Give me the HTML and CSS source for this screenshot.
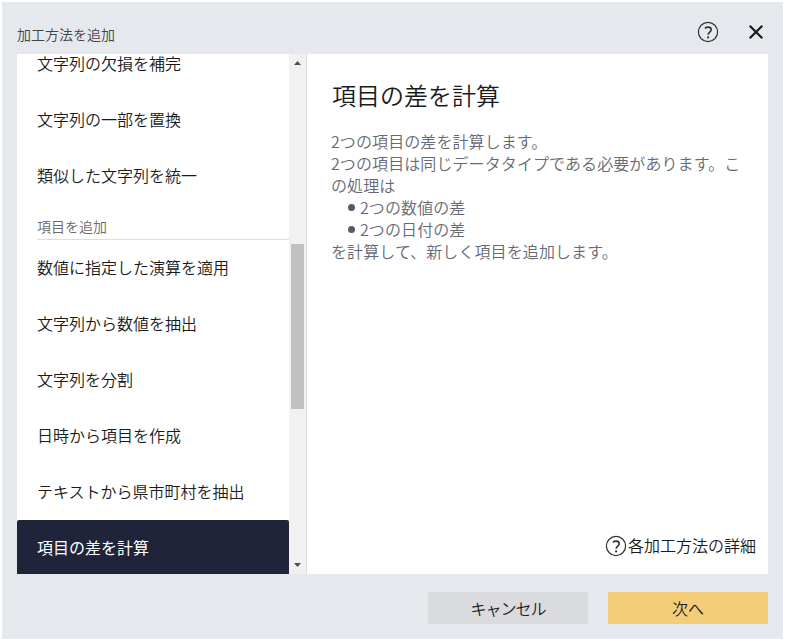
FILE: index.html
```html
<!DOCTYPE html>
<html lang="ja">
<head>
<meta charset="utf-8">
<title>加工方法を追加</title>
<link rel="stylesheet" href="styles.css">
</head>
<body>
<div class="dialog">
  <header class="header">
    <h1 class="title">加工方法を追加</h1>
    <div class="actions">
      <svg class="help" viewBox="0 0 22 22"><circle cx="11" cy="11" r="9.6"/><path d="M7.9 7.3C8.8 6.5 9.8 6.1 11 6.1c2 0 3.2 1 3.2 2.6 0 2.3-3 2.6-3 5"/><circle class="dot" cx="11.1" cy="16.4" r="1.1"/></svg>
      <svg class="close" viewBox="0 0 16 16"><path d="M1.7 1.7 14.3 14.3M14.3 1.7 1.7 14.3"/></svg>
    </div>
  </header>
  <main class="content">
    <nav class="list">
      <div class="item">文字列の欠損を補完</div>
      <div class="item">文字列の一部を置換</div>
      <div class="item">類似した文字列を統一</div>
      <div class="group">項目を追加</div>
      <div class="item">数値に指定した演算を適用</div>
      <div class="item">文字列から数値を抽出</div>
      <div class="item">文字列を分割</div>
      <div class="item">日時から項目を作成</div>
      <div class="item">テキストから県市町村を抽出</div>
      <div class="item selected">項目の差を計算</div>
    </nav>
    <div class="scrollbar">
      <svg class="arrow" viewBox="0 0 17 17"><path d="M5 11 8.5 7 12 11z"/></svg>
      <div class="track"><div class="thumb"></div></div>
      <svg class="arrow" viewBox="0 0 17 17"><path d="M5 6 8.5 10 12 6z"/></svg>
    </div>
    <section class="detail">
      <h2 class="heading">項目の差を計算</h2>
      <div class="text">
        <p>2つの項目の差を計算します。</p>
        <p>2つの項目は同じデータタイプである必要があります。この処理は</p>
        <ul class="points">
          <li>2つの数値の差</li>
          <li>2つの日付の差</li>
        </ul>
        <p>を計算して、新しく項目を追加します。</p>
      </div>
      <a class="more">
        <svg class="help" viewBox="0 0 22 22"><circle cx="11" cy="11" r="9.6"/><path d="M7.9 7.3C8.8 6.5 9.8 6.1 11 6.1c2 0 3.2 1 3.2 2.6 0 2.3-3 2.6-3 5"/><circle class="dot" cx="11.1" cy="16.4" r="1.1"/></svg>
        <span>各加工方法の詳細</span>
      </a>
    </section>
  </main>
  <footer class="footer">
    <button class="button cancel">キャンセル</button>
    <button class="button next">次へ</button>
  </footer>
</div>
</body>
</html>
```
FILE: styles.css
```css
* { box-sizing: border-box; }

body {
  margin: 0;
  padding: 2px;
  background: #fff;
  color: #1a1a1a;
  font: 350 16px/22px "Noto Sans CJK JP", sans-serif;
}

h1, h2, p, ul { margin: 0; padding: 0; font-weight: inherit; }

.dialog {
  display: flex;
  flex-direction: column;
  width: 781px;
  height: 637px;
  padding: 0 15px;
  background: #e5e9ee;
}

.header {
  display: flex;
  justify-content: space-between;
  height: 52px;
}

.title { padding-top: 21px; font-size: 14px; line-height: 22px; color: #444; }

.actions { display: flex; align-items: center; gap: 29px; height: 60px; padding-right: 4px; }

.help { width: 22px; height: 22px; fill: none; stroke: #333; stroke-width: 1.2; }
.help path { stroke-width: 1.6; }
.help .dot { fill: #333; stroke: none; }
.close { width: 16px; height: 16px; stroke: #1c1c1c; stroke-width: 2.2; }

.content {
  display: flex;
  height: 520px;
  background: #fff;
}

.list { width: 272px; overflow: hidden; }
.item { height: 56px; padding-left: 20px; line-height: 54px; }
.item:first-child { height: 38px; line-height: 18px; }
.group {
  height: 36px;
  margin-left: 20px;
  padding-top: 11px;
  border-bottom: 1px solid #ddd;
  font-size: 14px;
  color: #6a6a6a;
}
.selected { border-radius: 2px; background: #20243b; color: #fff; font-weight: 400; }

.scrollbar { display: flex; flex-direction: column; width: 17px; background: #f1f1f1; }
.arrow { width: 17px; height: 17px; fill: #505050; }
.track { flex: 1; padding: 173px 2px 0; }
.thumb { height: 165px; background: #c1c1c1; }

.detail {
  display: flex;
  flex: 1;
  flex-direction: column;
  padding: 23px 12px 17px 24px;
  border-left: 1px solid #ddd;
}
.heading { padding-left: 1px; font-size: 24px; line-height: 36px; }
.text { width: 414px; margin-top: 17px; color: #666973; letter-spacing: 0.09px; }
.points { list-style: none; }
.points li { display: flex; align-items: center; padding-left: 17px; }
.points li::before {
  width: 7px;
  height: 7px;
  margin-right: 5px;
  border-radius: 50%;
  background: #565a66;
  content: "";
}

.more { display: flex; align-items: center; justify-content: flex-end; gap: 1px; height: 22px; margin-top: auto; }
.more span { padding-bottom: 2px; }

.footer { display: flex; justify-content: flex-end; gap: 20px; padding-top: 18px; }
.button {
  width: 160px;
  height: 32px;
  padding: 0;
  border: 0;
  border-radius: 2px;
  color: #1c1c1c;
  font: inherit;
}
.cancel { background: #dadbdf; letter-spacing: -1px; }
.next { background: #f4cd78; }
```
